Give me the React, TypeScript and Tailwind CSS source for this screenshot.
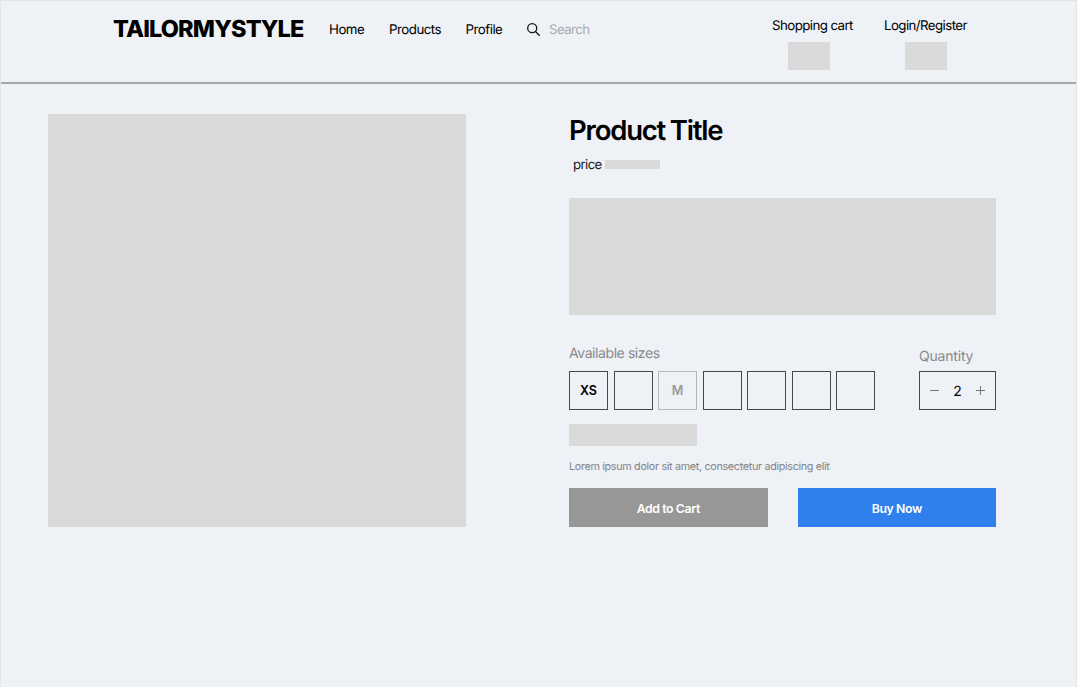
import React from "react";

const sizes = ["XS", "", "M", "", "", "", ""];

function AccountLink({ label, className, boxClass }: { label: string; className: string; boxClass: string }) {
  return (
    <div className={className}>
      <a className="ml-[1px] block text-[13.3px] leading-[22px] whitespace-nowrap">{label}</a>
      <div className={`mt-[5px] h-[28px] w-[42px] bg-[#d9d9d9] ${boxClass}`} />
    </div>
  );
}

function Header() {
  return (
    <header className="flex h-[81.5px] items-start border-b-2 border-[#a5a8aa] pl-[112px] text-black">
      <h1 className="mt-[12px] w-[216px] text-[23.5px] leading-[30px] font-extrabold tracking-[-0.85px]">
        TAILORMYSTYLE
      </h1>
      <nav className="mt-[17px] flex text-[13.3px] leading-[22px] tracking-[-0.5px]">
        <a className="w-[60px]">Home</a>
        <a className="w-[76.5px]">Products</a>
        <a className="w-[61.5px]">Profile</a>
      </nav>
      <div className="mt-[17px] flex h-[21px] items-center text-[13.3px] leading-[21px] tracking-[-0.6px] text-[#a8abae]">
        <svg width="14" height="14" viewBox="0 0 14 14" fill="none" stroke="#111" strokeWidth="1.3" strokeLinecap="round">
          <circle cx="5.2" cy="5.2" r="4.5" />
          <path d="M8.5 8.5L12.2 12.2" />
        </svg>
        <span className="ml-[8px] pt-[1px]">Search</span>
      </div>
      <div className="mt-[13px] mr-[110px] ml-auto flex gap-[30px]">
        <AccountLink label="Shopping cart" className="w-[82px] tracking-[-0.58px]" boxClass="ml-[17px]" />
        <AccountLink label="Login/Register" className="w-[83px] tracking-[-0.58px]" boxClass="ml-[22px]" />
      </div>
    </header>
  );
}

function SizePicker() {
  return (
    <div>
      <p className="h-[26px] text-[14px] leading-[18px] tracking-[-0.42px] text-[#87898c]">Available sizes</p>
      <div className="flex gap-[5.5px]">
        {sizes.map((size, i) => (
          <button
            key={i}
            className={`h-[39px] w-[39px] border pt-[2px] text-[12.5px] font-semibold ${
              size === "M" ? "border-[#b5b7b9] text-[#9b9b9b]" : "border-[#45484a] text-black"
            }`}
          >
            {size}
          </button>
        ))}
      </div>
    </div>
  );
}

function Quantity() {
  return (
    <div className="w-[77px]">
      <p className="mt-[2px] h-[24px] text-[14px] leading-[20px] tracking-[-0.2px] text-[#87898c]">Quantity</p>
      <div className="flex h-[39px] items-center justify-between border border-[#45484a] px-[10px]">
        <svg width="10" height="10" viewBox="0 0 10 10" stroke="#777" strokeWidth="1">
          <path d="M0 4.5H9" />
        </svg>
        <span className="pt-[2px] text-[14px] leading-[20px] text-black">2</span>
        <svg width="10" height="10" viewBox="0 0 10 10" stroke="#777" strokeWidth="1">
          <path d="M1 4.5H10M5.5 0V9" />
        </svg>
      </div>
    </div>
  );
}

function Details() {
  return (
    <section className="w-[427px]">
      <h2 className="h-[33px] text-[27.5px] leading-[32px] font-semibold tracking-[-1.2px] [word-spacing:-1px] text-black">Product Title</h2>
      <div className="mt-[7px] ml-[4px] flex h-[20px] items-center text-[13.3px] leading-[20px] tracking-[-0.65px] text-[#222]">
        <span className="w-[32px] pt-[2px]">price</span>
        <div className="h-[9px] w-[55px] bg-[#d9d9d9]" />
      </div>
      <div className="mt-[24px] h-[117px] bg-[#d9d9d9]" />
      <div className="mt-[30px] flex justify-between">
        <SizePicker />
        <Quantity />
      </div>
      <div className="mt-[14px] h-[22px] w-[128px] bg-[#d9d9d9]" />
      <p className="mt-[13px] h-[16px] text-[10.8px] leading-[16px] tracking-[-0.33px] whitespace-nowrap text-[#838588]">
        Lorem ipsum dolor sit amet, consectetur adipiscing elit
      </p>
      <div className="mt-[13px] flex gap-[30px] text-[12.3px] font-semibold tracking-[-0.4px] text-white">
        <button className="h-[39px] flex-1 bg-[#979797] pt-[3px]">Add to Cart</button>
        <button className="h-[39px] flex-1 bg-[#2f80ed] pt-[3px]">Buy Now</button>
      </div>
    </section>
  );
}

export default function App() {
  return (
    <div className="h-[687px] w-[1077px] overflow-hidden border-x border-t border-[#e2e4e6] bg-[#eef1f6] pt-[1px] font-['Inter',sans-serif] [text-rendering:geometricPrecision]">
      <Header />
      <main className="mt-[30.5px] ml-[47px] flex">
        <div className="mr-[103px] h-[413px] w-[418px] bg-[#d9d9d9]" />
        <Details />
      </main>
    </div>
  );
}
